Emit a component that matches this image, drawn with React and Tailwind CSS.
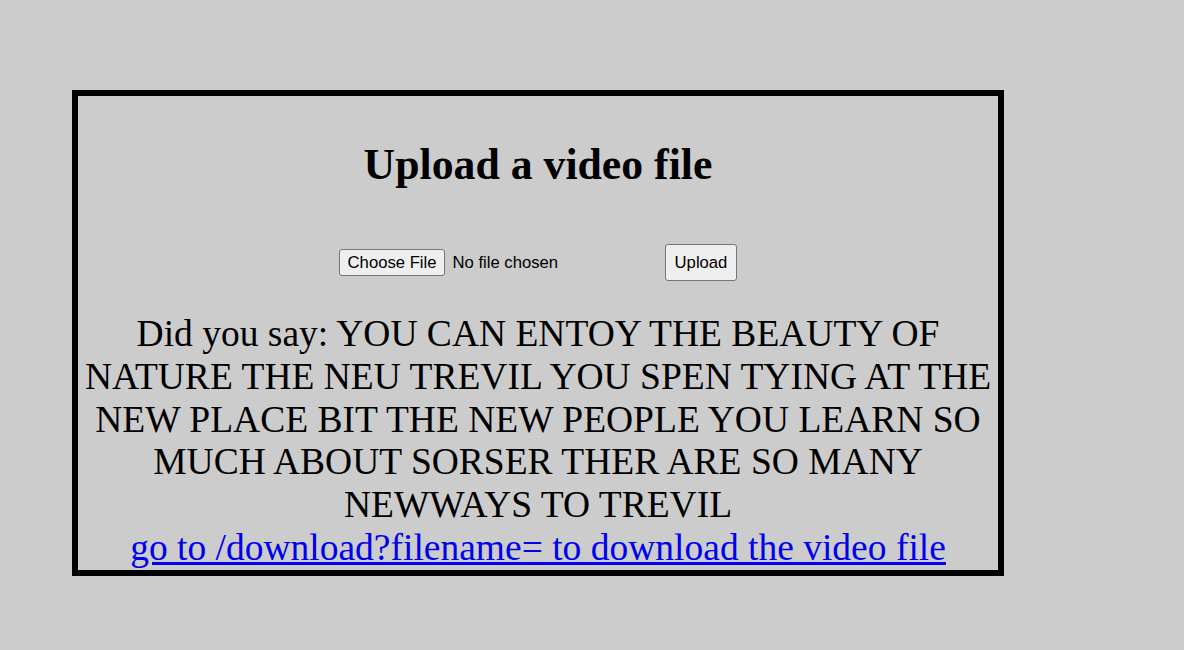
export default function App() {
  return (
    <div className="min-h-[650px] w-[1184px] bg-[#cccccc] pt-[90px] pl-[72px] font-['Liberation_Serif','Times_New_Roman',serif] text-black">
      <div className="w-[932px] border-[6px] border-black">
        <h1 className="mt-[43px] text-center text-[43.75px] font-bold leading-[50px]">
          Upload a video file
        </h1>
        <form
          className="mt-[55px] flex items-center justify-center gap-[10px]"
          onSubmit={(e) => e.preventDefault()}
        >
          <input
            type="file"
            name="file"
            className="w-[316px] font-['Liberation_Sans',Arial,sans-serif] text-[16.67px] leading-[19px] text-black file:mr-[7px] file:rounded-[3px] file:border file:border-solid file:border-[#767676] file:bg-[#efefef] file:px-[8px] file:py-[3px] file:leading-[19px] file:text-black"
          />
          <button
            type="submit"
            className="rounded-[3px] border border-solid border-[#767676] bg-[#efefef] px-[9px] py-[8px] font-['Liberation_Sans',Arial,sans-serif] text-[16.67px] leading-[19px] text-black"
          >
            Upload
          </button>
        </form>
        <p className="mt-[32px] text-center text-[37.5px] leading-[42.8px]">
          Did you say: YOU CAN ENTOY THE BEAUTY OF NATURE THE NEU TREVIL YOU SPEN TYING AT THE NEW PLACE BIT THE NEW PEOPLE YOU LEARN SO MUCH ABOUT SORSER THER ARE SO MANY NEWWAYS TO TREVIL
          <br />
          <a href="#" className="text-[#0000ee] underline">
            go to /download?filename= to download the video file
          </a>
        </p>
      </div>
    </div>
  );
}
